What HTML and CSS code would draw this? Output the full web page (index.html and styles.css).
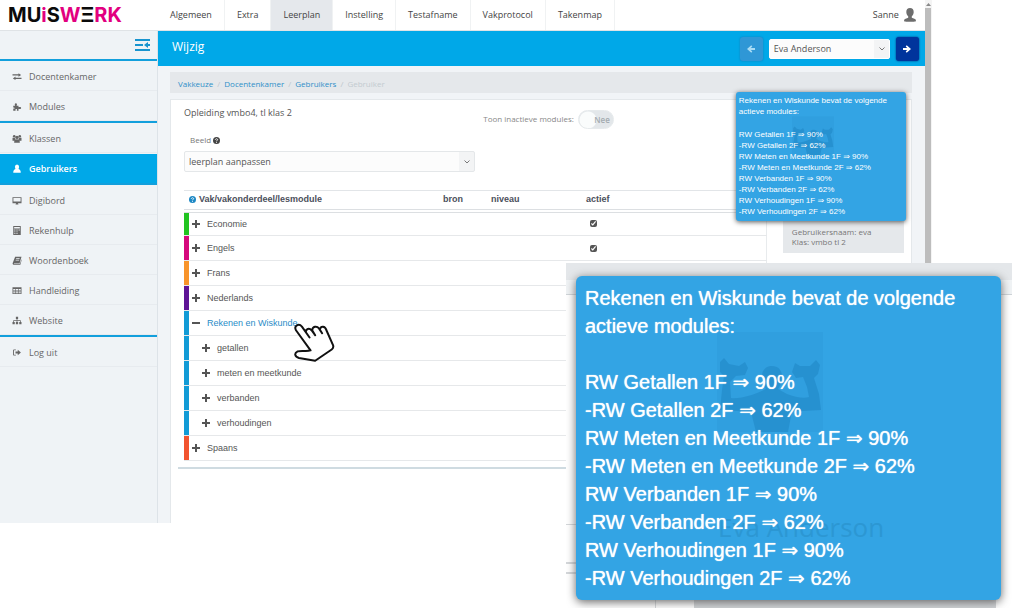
FILE: index.html
```html
<!DOCTYPE html>
<html lang="nl">
<head>
<meta charset="utf-8">
<title>Muiswerk - Leerplan</title>
<link rel="stylesheet" href="styles.css">
</head>
<body>
<div class="stage">
  <div class="window">
    <div class="app">
      <header class="topbar">
        <a class="logo" href="#" aria-label="Muiswerk">MU<b>i</b>S<b>W</b>Ξ<b>RK</b></a>
        <nav class="menu">
          <a href="#">Algemeen</a>
          <a href="#">Extra</a>
          <a href="#" class="current">Leerplan</a>
          <a href="#">Instelling</a>
          <a href="#">Testafname</a>
          <a href="#">Vakprotocol</a>
          <a href="#">Takenmap</a>
        </nav>
        <a class="account" href="#">Sanne
          <svg width="12" height="14" viewBox="0 0 12 14"><path fill="#6d6d6d" d="M6 0C3.600 0 2.300 1.600 2.300 4c0 1.900.8 3.400 1.900 4.300v1.500L1 11.100C.3 11.500 0 12.200 0 13.200c2 .8 10 .8 12 0 0-1-.3-1.700-1-2.100L7.800 9.800V8.300C8.900 7.400 9.700 5.900 9.700 4 9.700 1.600 8.400 0 6 0z"/></svg>
        </a>
      </header>

      <div class="body">
        <aside class="sidebar">
          <div class="toggle-row">
            <button type="button" class="collapse" aria-label="Menu inklappen">
              <svg width="15" height="12" viewBox="0 0 15 12"><path fill="#1794cf" d="M0 0h15v2H0zM0 5h8v2H0zM0 10h15v2H0zM9 6l4-3v2h2v2h-2v2z"/></svg>
            </button>
          </div>
          <ul class="group">
            <li><a href="#"><svg class="ico" viewBox="0 0 12 12"><path d="M0 3h8V1.500L11.500 4 8 6.200V4.600H0zM12 9.300H4v1.500L.5 8.600 4 6v1.700h8z"/></svg>Docentenkamer</a></li>
            <li><a href="#"><svg class="ico" viewBox="0 0 12 12"><path d="M1 5h2.600C2.500 3 3 1.500 4.500 1.500S6.500 3 5.400 5H8v2c1.500-.8 3.500-.6 3.500 1S9.500 9.800 8 9v2.500H5.700c.6-1.600.3-2.300-.7-2.300s-1.300.7-.8 2.300H1V8.800c1 .4 1.700.2 1.700-.6S2 7 1 7.500z"/></svg>Modules</a></li>
          </ul>
          <ul class="group">
            <li><a href="#"><svg class="ico" viewBox="0 0 12 12"><circle cx="2.300" cy="3" r="1.700"/><circle cx="9.700" cy="3" r="1.700"/><circle cx="6" cy="4.500" r="2.300"/><path d="M0 5h3l1 2-1.500 2H0zM12 5H9L8 7l1.500 2H12zM2.200 11.500c0-3 1-4.500 3.800-4.500s3.800 1.500 3.800 4.500z"/></svg>Klassen</a></li>
            <li class="active"><a href="#"><svg class="ico" viewBox="0 0 12 12"><ellipse cx="6" cy="4" rx="2.800" ry="3.500"/><path d="M1 11.500C1 8.500 2 7 4 6.500h4c2 .5 3 2 3 5z"/></svg>Gebruikers</a></li>
          </ul>
          <ul class="group">
            <li><a href="#"><svg class="ico" viewBox="0 0 12 12"><path fill-rule="evenodd" d="M0 1.500h12v8H7.300l.7 1.700H4l.7-1.700H0zM1.200 2.700v4.600h9.600V2.700z"/></svg>Digibord</a></li>
            <li><a href="#"><svg class="ico" viewBox="0 0 12 12"><path fill-rule="evenodd" d="M1 0h10v12H1zm1.200 1.300v2h7.600v-2zM2.300 4.800v1.200h1.600V4.800zm2.900 0v1.200h1.600V4.800zm2.900 0v1.200h1.600V4.800zM2.300 7.200v1.200h1.600V7.200zm2.900 0v1.200h1.600V7.200zM2.300 9.600v1.200h1.600V9.600zm2.900 0v1.200h1.600V9.600z"/></svg>Rekenhulp</a></li>
            <li><a href="#"><svg class="ico" viewBox="0 0 12 12"><path fill-rule="evenodd" d="M3.500 1H12L9.500 9.500H2v.8h8L12 4v2l-1.500 5.500H1.200C0 11 0 10 .4 9zM5 3l-.3 1h4.600l.3-1zm-.6 2-.3 1h4.600l.3-1z"/></svg>Woordenboek</a></li>
            <li><a href="#"><svg class="ico" viewBox="0 0 12 12"><path fill-rule="evenodd" d="M0 1.500h12v9H0zM1 4v1.300h2.800V4zm3.600 0v1.300h2.800V4zm3.600 0v1.300H11V4zM1 6.100v1.300h2.800V6.100zm3.600 0v1.300h2.800V6.100zm3.600 0v1.300H11V6.100zM1 8.200v1.300h2.800V8.200zm3.600 0v1.300h2.800V8.200zm3.600 0v1.300H11V8.200z"/></svg>Handleiding</a></li>
            <li><a href="#"><svg class="ico" viewBox="0 0 12 12"><path d="M4.500 1h3v3h-1v1.500H11V8h1v3H9V8h1V6.500H6.500V8h1v3h-3V8h1V6.500H2V8h1v3H0V8h1V5.500h4.500V4h-1z"/></svg>Website</a></li>
          </ul>
          <ul class="group">
            <li><a href="#"><svg class="ico" viewBox="0 0 12 12"><path d="M4.500 2v1H2v6h2.500v1H2C1 10 .8 9.500.8 9V3c0-.7.4-1 1.200-1zM4 4.700h3V2.300L11.200 6 7 9.700V7.300H4z"/></svg>Log uit</a></li>
          </ul>
        </aside>

        <main class="main">
          <div class="titlebar">
            <h1>Wijzig</h1>
            <button type="button" class="step prev" aria-label="Vorige"><svg width="8" height="8" viewBox="0 0 8 8"><path d="M4.300.3 5.300 1.400 3.800 2.900H8v2.200H3.800l1.500 1.500-1 1.100L0 4z"/></svg></button>
            <span class="picker user">
              <select aria-label="Gebruiker"><option>Eva Anderson</option></select>
              <svg class="chev" width="6" height="4" viewBox="0 0 6 4"><path d="M.5.5 3 3 5.500.5"/></svg>
            </span>
            <button type="button" class="step next" aria-label="Volgende"><svg width="8" height="8" viewBox="0 0 8 8"><path d="M3.700.3 2.700 1.400 4.200 2.900H0v2.200h4.200L2.700 6.600l1 1.100L8 4z"/></svg></button>
          </div>

          <nav class="crumbs">
            <a href="#">Vakkeuze</a><i>/</i><a href="#">Docentenkamer</a><i>/</i><a href="#">Gebruikers</a><i>/</i><span>Gebruiker</span>
          </nav>

          <section class="panel">
            <div class="plan">
              <div class="plan-head">
                <h2>Opleiding vmbo4, tl klas 2</h2>
                <label class="inactive" for="inactive">Toon inactieve modules:
                  <span class="switch"><input type="checkbox" id="inactive"><span>Nee</span></span>
                </label>
              </div>
              <label class="view-label" for="view">Beeld
                <svg width="7" height="7" viewBox="0 0 10 10"><circle cx="5" cy="5" r="5" fill="#444"/><path d="M3.400 4c0-2 3.200-2 3.200-.2C6.600 4.800 5 4.800 5 6.200M5 7.100v1.200" fill="none" stroke="#fff" stroke-width="1.300"/></svg>
              </label>
              <span class="picker view">
                <select id="view"><option>leerplan aanpassen</option></select>
                <svg class="chev" width="6" height="4" viewBox="0 0 6 4"><path d="M.5.5 3 3 5.500.5"/></svg>
              </span>

              <table class="modules">
                <colgroup><col class="c-name"><col class="c-bron"><col class="c-niveau"><col></colgroup>
                <thead>
                  <tr>
                    <th><svg width="7" height="7" viewBox="0 0 10 10"><circle cx="5" cy="5" r="5" fill="#1a87c4"/><path d="M3.400 4c0-2 3.200-2 3.200-.2C6.600 4.800 5 4.800 5 6.200M5 7.100v1.200" fill="none" stroke="#fff" stroke-width="1.300"/></svg>Vak/vakonderdeel/lesmodule</th>
                    <th>bron</th><th>niveau</th><th>actief</th>
                  </tr>
                </thead>
                <tbody>
                  <tr class="green"><td><button type="button" class="plus" aria-label="Uitklappen"></button>Economie</td><td></td><td></td><td><input type="checkbox" checked aria-label="Economie actief"></td></tr>
                  <tr class="pink"><td><button type="button" class="plus" aria-label="Uitklappen"></button>Engels</td><td></td><td></td><td><input type="checkbox" checked aria-label="Engels actief"></td></tr>
                  <tr class="orange"><td><button type="button" class="plus" aria-label="Uitklappen"></button>Frans</td><td></td><td></td><td></td></tr>
                  <tr class="purple"><td><button type="button" class="plus" aria-label="Uitklappen"></button>Nederlands</td><td></td><td></td><td></td></tr>
                  <tr class="blue open"><td><button type="button" class="minus" aria-label="Inklappen"></button>Rekenen en Wiskunde</td><td></td><td></td><td></td></tr>
                  <tr class="blue sub"><td><button type="button" class="plus" aria-label="Uitklappen"></button>getallen</td><td></td><td></td><td></td></tr>
                  <tr class="blue sub"><td><button type="button" class="plus" aria-label="Uitklappen"></button>meten en meetkunde</td><td></td><td></td><td></td></tr>
                  <tr class="blue sub"><td><button type="button" class="plus" aria-label="Uitklappen"></button>verbanden</td><td></td><td></td><td></td></tr>
                  <tr class="blue sub"><td><button type="button" class="plus" aria-label="Uitklappen"></button>verhoudingen</td><td></td><td></td><td></td></tr>
                  <tr class="red"><td><button type="button" class="plus" aria-label="Uitklappen"></button>Spaans</td><td></td><td></td><td></td></tr>
                </tbody>
              </table>
              <hr class="end">
            </div>
            <aside class="card">
              <p>Gebruikersnaam: eva</p>
              <p>Klas: vmbo tl 2</p>
            </aside>
            <div class="tip tip-small">
              <svg class="athlete" viewBox="0 0 106 100"><use href="#athlete"/></svg>
              <p>Rekenen en Wiskunde bevat de volgende actieve modules:</p>
              <ul>
                <li>RW Getallen 1F <i>⇒</i> 90%</li><li>-RW Getallen 2F <i>⇒</i> 62%</li>
                <li>RW Meten en Meetkunde 1F <i>⇒</i> 90%</li><li>-RW Meten en Meetkunde 2F <i>⇒</i> 62%</li>
                <li>RW Verbanden 1F <i>⇒</i> 90%</li><li>-RW Verbanden 2F <i>⇒</i> 62%</li>
                <li>RW Verhoudingen 1F <i>⇒</i> 90%</li><li>-RW Verhoudingen 2F <i>⇒</i> 62%</li>
              </ul>
            </div>
          </section>
        </main>
      </div>
    </div>
    <div class="scroll"><svg width="5" height="3" viewBox="0 0 5 3"><path fill="#888" d="M0 3 2.500 0 5 3z"/></svg><div class="thumb"></div></div>
  </div>

  <svg class="hand" viewBox="0 0 130 125"><path d="M50 46 27 13C17 1 2 11 9 24L53 85C42 89 25 84 14 88 2 94 6 105 18 108L67 116 117 82C122 78 123 74 121 69L101 24C97 10 84 11 82 20M50 46 39 30C38 20 49 16 56 24L67 39M67 39 58 24C59 12 72 10 79 19L88 33"/></svg>

  <div class="magnified">
    <div class="mag-card"></div>
    <div class="mag-lines"></div>
    <div class="tip tip-large">
      <svg class="athlete" viewBox="0 0 106 100">
        <g id="athlete"><path fill="rgba(0,70,130,.05)" d="M0 0h106v100H0z"/>
        <path fill="rgba(0,90,150,.2)" d="M3 30 7 26 12 32 22 34 28 30 31 36 28 43 19 44 13 50 14 66C22 67 32 64 40 61L49 57C46 52 44 48 45 43 46 35 52 34 55 34 61 34 65 38 65 44 65 50 63 54 61 57L70 62C78 65 87 67 92 65L90 55 86 45 79 46 75 40 78 31 83 34 93 34 99 28 103 33 101 42 97 46 102 62 104 78 87 79 75 79 71 100H39L34 80 20 79 3 78 5 58 7 44 3 40z"/></g>
      </svg>
      <span class="ghost">Eva Anderson</span>
      <p>Rekenen en Wiskunde bevat de volgende actieve modules:</p>
      <ul>
        <li>RW Getallen 1F <i>⇒</i> 90%</li><li>-RW Getallen 2F <i>⇒</i> 62%</li>
        <li>RW Meten en Meetkunde 1F <i>⇒</i> 90%</li><li>-RW Meten en Meetkunde 2F <i>⇒</i> 62%</li>
        <li>RW Verbanden 1F <i>⇒</i> 90%</li><li>-RW Verbanden 2F <i>⇒</i> 62%</li>
        <li>RW Verhoudingen 1F <i>⇒</i> 90%</li><li>-RW Verhoudingen 2F <i>⇒</i> 62%</li>
      </ul>
    </div>
  </div>
</div>
</body>
</html>
```
FILE: styles.css
```css
* { box-sizing: border-box; }
body { margin: 0; background: #fff; color: #555; font: 9px/12px "Open Sans", "Noto Sans", sans-serif; }
a { color: inherit; text-decoration: none; }
ul, p, h1, h2 { margin: 0; padding: 0; font-weight: 400; }
ul { list-style: none; }
button { margin: 0; padding: 0; border: 0; background: none; }

.stage { position: relative; min-height: 100vh; }
.window { display: flex; width: 91%; }
.app { flex: 1; min-width: 0; }
.scroll { width: 7px; background: #f4f4f4; display: flex; flex-direction: column; align-items: center; gap: 2px; padding-top: 3px; }
.thumb { flex: 1; width: 6px; background: #bdbdbd; }

.topbar { display: flex; height: 31px; border-bottom: 1px solid #dfe3e6; color: #444; }
.logo { width: 158px; padding-left: 8px; font: 700 20px/31px Inter, sans-serif; color: #0b0b0b; white-space: nowrap; }
.logo b { color: #e2007f; font-weight: 700; }
.menu { display: flex; flex: 1; }
.menu a { padding: 0 12px; line-height: 30px; border-right: 1px solid #f0f2f3; }
.menu .current { background: #e5e8ec; }
.account { display: flex; align-items: center; gap: 5px; padding-right: 9px; }

.body { display: flex; }
.sidebar { width: 158px; background: #eff3f6; border-right: 1px solid #dde3e8; color: #666; }
.toggle-row { display: flex; justify-content: flex-end; align-items: center; height: 28px; padding-right: 7px; }
.collapse { display: flex; }
.group { display: grid; gap: 1px; padding-top: 1px; border-top: 2px solid #129fdc; }
.group li { height: 29px; border-bottom: 1px solid #e7ebef; }
.group a { display: flex; align-items: center; gap: 7px; height: 29px; padding-left: 12px; }
.ico { width: 10px; height: 9px; fill: #666; }
.group .active { background: #00a8e8; border-color: #00a8e8; color: #fff; font-weight: 600; }
.active .ico { fill: #fff; }

.main { flex: 1; display: flex; flex-direction: column; min-width: 0; background: #f1f4f7; }
.titlebar { display: flex; align-items: center; gap: 6px; height: 35px; padding: 0 6px 0 14px; background: #00a8e8; }
.titlebar h1 { flex: 1; color: #fff; font-size: 12px; line-height: 16px; padding-bottom: 4px; }
.step { display: flex; align-items: center; justify-content: center; width: 23px; height: 24px; border-radius: 3px; fill: #fff; }
.prev { background: #2f97d6; fill: #a9dcf5; box-shadow: 0 0 2px #1479b4; }
.next { background: #00349c; box-shadow: 0 0 2px #00226a; }
.picker { position: relative; display: flex; }
.picker select { width: 100%; border: 1px solid #e4e7e9; border-radius: 2px; background: linear-gradient(#f3f4f5, #f3f4f5) right / 15px 100% no-repeat #fcfcfc; appearance: none; color: #555; font: inherit; padding: 0 20px 0 4px; }
.chev { position: absolute; right: 5px; top: 50%; margin-top: -2px; fill: none; stroke: #777; pointer-events: none; }
.user { width: 121px; }
.user select { height: 20px; border-color: #fff; }

.crumbs { display: flex; align-items: center; height: 21px; margin: 6px 13px 6px 12px; padding: 2px 0 0 8px; background: #e5e8eb; color: #2f8fc9; font-size: 8px; }
.crumbs i { width: 11px; text-align: center; color: #bcc6cc; font-style: normal; }
.crumbs span { color: #c3cbd0; }

.panel { position: relative; flex: 1; display: flex; gap: 16px; margin: 0 13px 0 12px; padding: 7px 7px 54px 13px; background: #fff; border: solid #e4e8eb; border-width: 1px 1px 0; }
.plan { flex: 1; min-width: 0; }
.plan-head { display: flex; justify-content: space-between; height: 27px; }
.plan-head h2 { font-size: 9px; line-height: 12px; }
.inactive { display: flex; align-items: center; gap: 4px; height: 24px; padding-right: 153px; color: #888; font-size: 8px; }
.switch { position: relative; }
.switch input { display: block; width: 36px; height: 19px; margin: 0; border-radius: 10px; appearance: none; background: radial-gradient(circle at 9px 9px, #fafcfc 8px, #e3e7ea 9px); border: 1px solid #e6eaec; }
.switch span { position: absolute; right: 4px; top: 4px; color: #a4abb0; font-weight: 600; }
.view-label { display: flex; align-items: center; gap: 2px; padding: 0 0 5px 6px; font-size: 8px; color: #777; }
.view { max-width: 291px; }
.view select { height: 21px; }

.modules { width: 100%; margin-top: 18px; border-collapse: collapse; table-layout: fixed; font: 9px/12px "Liberation Sans", Arial, sans-serif; border-right: 1px solid #e8ebed; }
.c-name { width: 259px; }
.c-bron { width: 48px; }
.c-niveau { width: 95px; }
.modules th { height: 20px; padding: 0 0 2px; text-align: left; vertical-align: middle; color: #4b4f5c; border: 0; border-top: 1px solid #e2e5e8; border-bottom: 4px double #dcdfe2; white-space: nowrap; }
.modules th:first-child { padding-left: 5px; }
.modules th svg { margin-right: 3px; vertical-align: -1px; }
.modules td { height: 25px; padding: 0; border-bottom: 1px solid #e6e8ea; white-space: nowrap; }
.modules td:first-child { padding-left: 8px; background: linear-gradient(var(--mark), var(--mark)) left top / 5px 24px no-repeat; }
.modules .sub td:first-child { padding-left: 18px; }
.modules td input { display: block; width: 7px; height: 7px; margin: 0 0 0 4px; accent-color: #555; }
.green { --mark: #22c421; }
.pink { --mark: #d6097d; }
.orange { --mark: #f8942b; }
.purple { --mark: #5f1496; }
.blue { --mark: #129bd6; }
.red { --mark: #f2542f; }
.open { color: #2a8cc7; }
.plus, .minus { width: 8px; height: 8px; margin-right: 7px; vertical-align: -1px; background: linear-gradient(#555, #555) center / 8px 2px no-repeat; }
.plus { background: linear-gradient(#555, #555) center / 8px 2px no-repeat, linear-gradient(#555, #555) center / 2px 8px no-repeat; }
.end { height: 2px; margin: 6px 0 0 -6px; border: 0; background: #cfdbe1; }
.card { display: flex; flex-direction: column; justify-content: flex-end; width: 121px; height: 146px; padding: 0 9px 6px; background: #e5e8eb; color: #777; font-size: 8px; line-height: 10px; }

.tip { position: absolute; background: #33a4e4; color: #fff; font-family: "Liberation Sans", Arial, sans-serif; }
.tip p, .tip ul { position: relative; }
.tip ul { white-space: nowrap; }
.tip i { font-family: "DejaVu Sans", sans-serif; font-style: normal; line-height: 1; }
.athlete { position: absolute; }
.tip-small { right: 5px; top: -8px; width: 170px; padding: 3px; border-radius: 3px; box-shadow: 0 1px 5px #555; font-size: 8px; line-height: 11px; }
.tip-small ul { margin-top: 12px; padding-bottom: 1px; }
.tip-small .athlete { left: 56px; top: 24px; width: 42px; height: 40px; }

.magnified { position: absolute; left: 566px; right: 12px; top: 263px; height: 345px; overflow: hidden; background: linear-gradient(#e4e7ea 17px, #f0f3f5 17px, #f0f3f5 31px, #cfd4d8 31px, #cfd4d8 32px, #fff 32px); }
.mag-card { position: absolute; left: 128px; right: 16px; bottom: 0; height: 240px; background: #d0d3d6; }
.mag-lines { position: absolute; left: 0; top: 261px; bottom: 0; width: 90px; border-top: 1px solid #d4d7da; border-right: 1px solid #d4d7da; background: linear-gradient(transparent 37px, #d4d7da 37px, #d4d7da 39px, transparent 39px, transparent 47px, #d4d7da 47px, #d4d7da 49px, transparent 49px); }
.tip-large { inset: 13px 11px 8px 10px; padding: 8px 9px; border-radius: 6px; box-shadow: 0 2px 10px #666; font-size: 20px; line-height: 28px; text-shadow: 0 0 1px #fff; }
.tip-large ul { margin-top: 28px; }
.tip-large .athlete { left: 141px; top: 56px; width: 106px; height: 100px; }
.ghost { position: absolute; left: 142px; top: 233px; font: 26px/36px "Open Sans", sans-serif; color: #2c97d3; text-shadow: none; }

.hand { position: absolute; left: 293px; top: 322px; width: 43px; height: 42px; fill: #fff; stroke: #111; stroke-width: 6; stroke-linejoin: round; stroke-linecap: round; }
```
